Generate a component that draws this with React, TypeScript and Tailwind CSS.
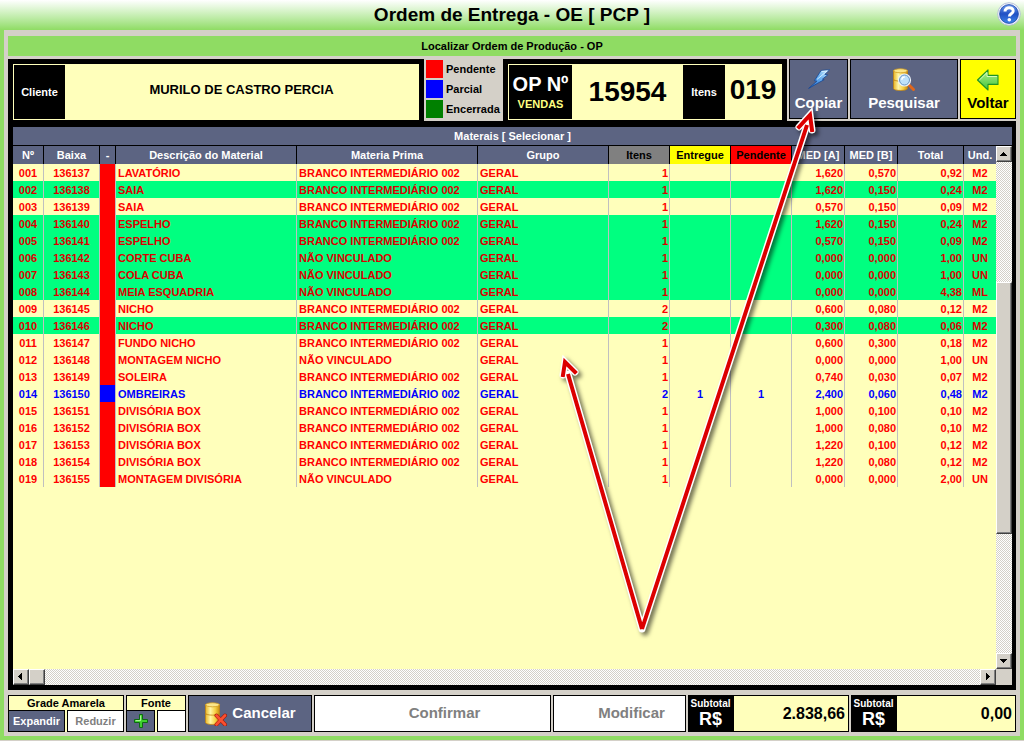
import { ReactNode } from 'react';

type Status = 'pendente' | 'parcial';

interface Material {
  baixa: string;
  descricao: string;
  vinculado: boolean;
  itens: number;
  entregue?: number;
  pendente?: number;
  medA: string;
  medB: string;
  total: string;
  und: string;
  status: Status;
  marked?: boolean;
}

const MATERIAIS: Material[] = [
  { baixa: '136137', descricao: 'LAVATÓRIO', vinculado: true, itens: 1, medA: '1,620', medB: '0,570', total: '0,92', und: 'M2', status: 'pendente' },
  { baixa: '136138', descricao: 'SAIA', vinculado: true, itens: 1, medA: '1,620', medB: '0,150', total: '0,24', und: 'M2', status: 'pendente', marked: true },
  { baixa: '136139', descricao: 'SAIA', vinculado: true, itens: 1, medA: '0,570', medB: '0,150', total: '0,09', und: 'M2', status: 'pendente' },
  { baixa: '136140', descricao: 'ESPELHO', vinculado: true, itens: 1, medA: '1,620', medB: '0,150', total: '0,24', und: 'M2', status: 'pendente', marked: true },
  { baixa: '136141', descricao: 'ESPELHO', vinculado: true, itens: 1, medA: '0,570', medB: '0,150', total: '0,09', und: 'M2', status: 'pendente', marked: true },
  { baixa: '136142', descricao: 'CORTE CUBA', vinculado: false, itens: 1, medA: '0,000', medB: '0,000', total: '1,00', und: 'UN', status: 'pendente', marked: true },
  { baixa: '136143', descricao: 'COLA CUBA', vinculado: false, itens: 1, medA: '0,000', medB: '0,000', total: '1,00', und: 'UN', status: 'pendente', marked: true },
  { baixa: '136144', descricao: 'MEIA ESQUADRIA', vinculado: false, itens: 1, medA: '0,000', medB: '0,000', total: '4,38', und: 'ML', status: 'pendente', marked: true },
  { baixa: '136145', descricao: 'NICHO', vinculado: true, itens: 2, medA: '0,600', medB: '0,080', total: '0,12', und: 'M2', status: 'pendente' },
  { baixa: '136146', descricao: 'NICHO', vinculado: true, itens: 2, medA: '0,300', medB: '0,080', total: '0,06', und: 'M2', status: 'pendente', marked: true },
  { baixa: '136147', descricao: 'FUNDO NICHO', vinculado: true, itens: 1, medA: '0,600', medB: '0,300', total: '0,18', und: 'M2', status: 'pendente' },
  { baixa: '136148', descricao: 'MONTAGEM NICHO', vinculado: false, itens: 1, medA: '0,000', medB: '0,000', total: '1,00', und: 'UN', status: 'pendente' },
  { baixa: '136149', descricao: 'SOLEIRA', vinculado: true, itens: 1, medA: '0,740', medB: '0,030', total: '0,07', und: 'M2', status: 'pendente' },
  { baixa: '136150', descricao: 'OMBREIRAS', vinculado: true, itens: 2, entregue: 1, pendente: 1, medA: '2,400', medB: '0,060', total: '0,48', und: 'M2', status: 'parcial' },
  { baixa: '136151', descricao: 'DIVISÓRIA BOX', vinculado: true, itens: 1, medA: '1,000', medB: '0,100', total: '0,10', und: 'M2', status: 'pendente' },
  { baixa: '136152', descricao: 'DIVISÓRIA BOX', vinculado: true, itens: 1, medA: '1,000', medB: '0,080', total: '0,10', und: 'M2', status: 'pendente' },
  { baixa: '136153', descricao: 'DIVISÓRIA BOX', vinculado: true, itens: 1, medA: '1,220', medB: '0,100', total: '0,12', und: 'M2', status: 'pendente' },
  { baixa: '136154', descricao: 'DIVISÓRIA BOX', vinculado: true, itens: 1, medA: '1,220', medB: '0,080', total: '0,12', und: 'M2', status: 'pendente' },
  { baixa: '136155', descricao: 'MONTAGEM DIVISÓRIA', vinculado: false, itens: 1, medA: '0,000', medB: '0,000', total: '2,00', und: 'UN', status: 'pendente' },
];

const COLUMNS = [
  { label: 'Nº', width: 'w-[31px]', head: '' },
  { label: 'Baixa', width: 'w-[56px]', head: '' },
  { label: '-', width: 'w-[16px]', head: '' },
  { label: 'Descrição do Material', width: '', head: '' },
  { label: 'Materia Prima', width: 'w-[181px]', head: '' },
  { label: 'Grupo', width: 'w-[131px]', head: '' },
  { label: 'Itens', width: 'w-[61px]', head: 'bg-[#808080] text-black' },
  { label: 'Entregue', width: 'w-[61px]', head: 'bg-[#ffff00] text-black' },
  { label: 'Pendente', width: 'w-[61px]', head: 'bg-[#ff0000] text-black' },
  { label: 'MED [A]', width: 'w-[53px]', head: '' },
  { label: 'MED [B]', width: 'w-[53px]', head: '' },
  { label: 'Total', width: 'w-[66px]', head: '' },
  { label: 'Und.', width: 'w-[32px]', head: '' },
];

const LEGEND = [
  { label: 'Pendente', color: 'bg-[#ff0000]' },
  { label: 'Parcial', color: 'bg-[#0000ff]' },
  { label: 'Encerrada', color: 'bg-[#008000]' },
];

function HelpIcon() {
  return (
    <svg className="w-6 h-6" viewBox="0 0 24 24" fill="none">
      <defs>
        <linearGradient id="help" x1="0" y1="0" x2="0" y2="1">
          <stop offset="0" stopColor="#6f9df0" />
          <stop offset="0.5" stopColor="#2050c4" />
          <stop offset="1" stopColor="#3f86ea" />
        </linearGradient>
      </defs>
      <circle cx="12" cy="12" r="11.3" fill="#f4f6fc" stroke="#a9b4d4" strokeWidth="0.8" />
      <circle cx="12" cy="12" r="9.4" fill="url(#help)" stroke="#1c47a8" strokeWidth="0.8" />
      <path d="M8 9.6C8 4.4 16.2 4.6 16.2 9c0 2.8-3.8 2.8-3.8 5.4" stroke="#fff" strokeWidth="3" />
      <circle cx="12.3" cy="17.7" r="1.8" fill="#fff" />
    </svg>
  );
}

function BoltIcon() {
  return (
    <svg className="w-6 h-6" viewBox="0 0 24 24">
      <defs>
        <linearGradient id="bolt" x1="1" y1="0" x2="0" y2="1">
          <stop offset="0" stopColor="#c8ecff" />
          <stop offset="0.5" stopColor="#5ea8ee" />
          <stop offset="1" stopColor="#1d63c6" />
        </linearGradient>
      </defs>
      <path d="M14.2 2.4 22.6 1.8 17.8 6.4l3 .4-5.4 4.4 1.8.4L1.6 20.4l8.2-7.2-2.4-.6z" fill="url(#bolt)" stroke="#174795" strokeWidth="0.8" strokeLinejoin="round" />
      <path d="M14.8 3.4 20.2 3 10 11.4" fill="none" stroke="#e6f7ff" strokeWidth="0.8" />
    </svg>
  );
}

function Cylinder() {
  return (
    <>
      <defs>
        <linearGradient id="gold" x1="0" y1="0" x2="1" y2="0">
          <stop offset="0" stopColor="#e9b524" />
          <stop offset="0.35" stopColor="#fff6a8" />
          <stop offset="0.7" stopColor="#f6d043" />
          <stop offset="1" stopColor="#c98c10" />
        </linearGradient>
      </defs>
      <path d="M1.5 12v8.5c0 2.6 14 2.6 14 0V12z" fill="url(#gold)" stroke="#c08414" strokeWidth="0.8" />
      <path d="M1.5 2.8v8.4c0 2.6 14 2.6 14 0V2.8z" fill="url(#gold)" stroke="#c08414" strokeWidth="0.8" />
      <ellipse cx="8.5" cy="2.8" rx="7" ry="2" fill="#fbe68a" stroke="#d09a20" strokeWidth="0.8" />
    </>
  );
}

function SearchDataIcon() {
  return (
    <svg className="w-6 h-6" viewBox="0 0 24 24">
      <Cylinder />
      <path d="m16.5 16.5 5 5" stroke="#e0661c" strokeWidth="3" strokeLinecap="round" />
      <circle cx="12.5" cy="12" r="5.8" fill="#bfe2fa" stroke="#eef3f8" strokeWidth="1.6" />
      <circle cx="12.5" cy="12" r="5" fill="none" stroke="#5e8fc0" strokeWidth="0.9" />
      <path d="M9.8 11.8c.2-2 1.6-2.9 3-2.8" fill="none" stroke="#fff" strokeWidth="1.4" />
    </svg>
  );
}

function CancelDataIcon() {
  return (
    <svg className="w-6 h-6" viewBox="0 0 24 24">
      <Cylinder />
      <path d="m12.5 13.5 8.5 9m0-9-8.5 9" stroke="#a01808" strokeWidth="4" strokeLinecap="round" />
      <path d="m12.5 13.5 8.5 9m0-9-8.5 9" stroke="#fa5030" strokeWidth="2.6" strokeLinecap="round" />
    </svg>
  );
}

function BackIcon() {
  return (
    <svg className="w-6 h-6" viewBox="0 0 24 24">
      <defs>
        <linearGradient id="back" x1="0" y1="0" x2="0" y2="1">
          <stop offset="0" stopColor="#b4f08a" />
          <stop offset="1" stopColor="#3fc43a" />
        </linearGradient>
      </defs>
      <path d="M1.5 12 12 1.8v5.6h10v9H12V22z" fill="url(#back)" stroke="#1f9426" strokeWidth="1.1" strokeLinejoin="round" />
      <path d="M3.4 12 11 4.6v3.9h9.9" fill="none" stroke="#dcffc4" strokeWidth="0.9" />
    </svg>
  );
}

function PlusIcon() {
  return (
    <svg className="w-4 h-4" viewBox="0 0 16 16">
      <path d="M6.5 1.5h3v5h5v3h-5v5h-3v-5h-5v-3h5z" fill="#3fd02e" stroke="#0c6a10" strokeWidth="1" strokeLinejoin="round" />
      <path d="M7.6 2.6v5H2.6" fill="none" stroke="#c0ffa8" strokeWidth="0.9" />
    </svg>
  );
}

const TRACK = 'bg-[conic-gradient(#ffffff_25%,#d4d0c8_0_50%,#ffffff_0_75%,#d4d0c8_0)] bg-[length:2px_2px]';
const THUMB = 'bg-[#d4d0c8] border border-t-white border-l-white border-r-[#404040] border-b-[#404040] shadow-[inset_-1px_-1px_0_#808080]';

function ScrollButton({ label, path, className }: { label: string; path: string; className?: string }) {
  return (
    <button aria-label={label} className={`flex-none w-4 h-4 flex items-center justify-center ${THUMB} ${className ?? ''}`}>
      <svg className="w-2 h-2" viewBox="0 0 8 8" shapeRendering="crispEdges">
        <path d={path} fill="#000" />
      </svg>
    </button>
  );
}

function ToolButton({ label, icon, className }: { label: string; icon: ReactNode; className: string }) {
  return (
    <button className={`flex-none h-[60px] border border-black flex flex-col items-center justify-center gap-[3px] text-[15px] leading-4 font-bold ${className}`}>
      {icon}
      {label}
    </button>
  );
}

function Subtotal({ id, value, className }: { id: string; value: string; className: string }) {
  return (
    <div className={`flex-none flex ${className}`}>
      <label htmlFor={id} className="flex-none w-[45px] bg-black text-white font-bold text-center text-[10px] leading-3 pt-[3px]">
        Subtotal
        <span className="block text-lg leading-[18px]">R$</span>
      </label>
      <input
        id={id}
        readOnly
        value={value}
        className="flex-1 min-w-0 bg-[#ffffbb] border border-black text-right text-base font-bold pr-[3px]"
      />
    </div>
  );
}

// Red annotation arrows drawn over the grid
function Arrows() {
  const lines = 'M642 629 568 374M642 629 807 125';
  const heads = 'M563 375 565 362 575 372M799 127 810 115 812 130';
  return (
    <svg className="absolute top-0 left-0 w-[1024px] h-[741px] pointer-events-none" viewBox="0 0 1024 741" fill="none">
      <g className="drop-shadow-[3px_3px_2px_rgba(0,0,0,0.55)]">
        <path d={lines} stroke="#fff" strokeWidth="7" strokeLinecap="round" />
        <path d={heads} stroke="#fff" strokeWidth="7" strokeLinecap="round" />
        <path d={lines} stroke="#dc0000" strokeWidth="4" />
        <path d={heads} stroke="#dc0000" strokeWidth="4" strokeLinecap="square" />
      </g>
    </svg>
  );
}

function MaterialRow({ item, index }: { item: Material; index: number }) {
  const parcial = item.status === 'parcial';
  const text = parcial ? 'text-[#0000ff]' : item.marked ? 'text-[#dc0000]' : 'text-[#ff0000]';
  const cell = 'border-r border-[#c0c0c0] whitespace-nowrap';

  return (
    <tr className={`h-[17px] ${text} ${item.marked ? 'bg-[#00ff80]' : ''}`}>
      <td className={`${cell} text-center`}>{String(index + 1).padStart(3, '0')}</td>
      <td className={`${cell} text-center`}>{item.baixa}</td>
      <td className={`${cell} ${parcial ? 'bg-[#0000ff]' : 'bg-[#ff0000]'}`} />
      <td className={`${cell} pl-0.5`}>{item.descricao}</td>
      <td className={`${cell} pl-0.5`}>{item.vinculado ? 'BRANCO INTERMEDIÁRIO 002' : 'NÃO VINCULADO'}</td>
      <td className={`${cell} pl-0.5`}>GERAL</td>
      <td className={`${cell} text-right pr-px`}>{item.itens}</td>
      <td className={`${cell} text-center`}>{item.entregue}</td>
      <td className={`${cell} text-center`}>{item.pendente}</td>
      <td className={`${cell} text-right pr-px`}>{item.medA}</td>
      <td className={`${cell} text-right pr-px`}>{item.medB}</td>
      <td className={`${cell} text-right pr-px`}>{item.total}</td>
      <td className="text-center">{item.und}</td>
    </tr>
  );
}

export default function App() {
  return (
    <div className="relative min-h-screen flex flex-col bg-[#8fdc63] font-['Liberation_Sans',Arial,sans-serif] text-black pb-1 border-b border-[#d4d0c8]">
      {/* Title bar */}
      <header className="flex-none relative h-[30px] bg-linear-to-b from-white to-[#8fdc63] flex items-center justify-center">
        <h1 className="text-[19px] leading-6 font-bold">Ordem de Entrega - OE [ PCP ]</h1>
        <button aria-label="Ajuda" className="absolute top-0.5 right-[3px]">
          <HelpIcon />
        </button>
      </header>

      <main className="flex-1 flex flex-col mx-1 px-1 pt-1.5 pb-1 bg-[#d4d0c8]">
        <h2 className="flex-none h-5 bg-[#8fdc63] text-center text-[11px] leading-5 font-bold">
          Localizar Ordem de Produção - OP
        </h2>

        {/* Order summary */}
        <div className="flex-none flex mt-[3px] h-[62px]">
          <div className="flex-1 min-w-0 bg-black p-[5px]">
            <div className="h-[56px] flex bg-[#ffffbb] p-px">
              <label htmlFor="cliente" className="flex-none w-[51px] bg-black text-white text-[11px] font-bold flex items-center justify-center">
                Cliente
              </label>
              <input
                id="cliente"
                readOnly
                value="MURILO DE CASTRO PERCIA"
                className="flex-1 min-w-0 pb-1 text-center text-[13px] font-bold"
              />
            </div>
          </div>

          <ul className="flex-none w-[79px] pl-0.5 pt-px flex flex-col gap-0.5 text-[11px] font-bold">
            {LEGEND.map((item) => (
              <li key={item.label} className="flex items-center gap-[3px]">
                <span className={`flex-none w-[17px] h-[18px] ${item.color}`} />
                {item.label}
              </li>
            ))}
          </ul>

          <div className="flex-none w-[284px] bg-black p-[5px]">
            <div className="h-[56px] flex bg-[#ffffbb] p-px font-bold">
              <div className="flex-none w-[63px] bg-black text-white text-center">
                <div className="text-xl leading-6 pt-[7px]">OP Nº</div>
                <div className="text-[11px] leading-4 text-[#ffff80]">VENDAS</div>
              </div>
              <div className="flex-1 flex items-center justify-center text-[28px]">15954</div>
              <div className="flex-none w-[42px] bg-black text-white text-[11px] flex items-center justify-center">Itens</div>
              <div className="flex-none w-[56px] flex items-center justify-center pb-1 text-[28px]">019</div>
            </div>
          </div>

          <div className="flex-none flex gap-0.5 pl-0.5">
            <ToolButton label="Copiar" icon={<BoltIcon />} className="w-[59px] bg-[#5c6482] text-white" />
            <ToolButton label="Pesquisar" icon={<SearchDataIcon />} className="w-[108px] bg-[#5c6482] text-white" />
            <ToolButton label="Voltar" icon={<BackIcon />} className="w-[56px] bg-[#ffff00] text-black" />
          </div>
        </div>

        {/* Materials grid */}
        <section className="flex-1 flex flex-col bg-black pt-1.5 pb-[5px] pl-[5px] pr-1">
          <h3 className="flex-none h-[18px] bg-[#5c6482] text-white text-center text-[11px] leading-[18px] font-bold">
            Materais [ Selecionar ]
          </h3>
          <div className="flex-1 flex mt-px bg-[#ffffbb]">
            <div className="flex-1 min-w-0">
              <table className="w-full table-fixed border-separate border-spacing-0 text-[11px] leading-4 font-bold">
                <thead>
                  <tr className="h-[18px] text-white">
                    {COLUMNS.map((col, i) => (
                      <th
                        key={col.label}
                        className={`${col.width} ${col.head || 'bg-[#5c6482]'} whitespace-nowrap border-black ${i < COLUMNS.length - 1 ? 'border-r' : ''}`}
                      >
                        {col.label}
                      </th>
                    ))}
                  </tr>
                </thead>
                <tbody>
                  {MATERIAIS.map((item, i) => (
                    <MaterialRow key={item.baixa} item={item} index={i} />
                  ))}
                </tbody>
              </table>
            </div>
            <div className={`flex-none w-4 flex flex-col ${TRACK}`}>
              <ScrollButton label="Rolar para cima" path="M3 2h1v1h1v1h1v1h1v1H0V5h1V4h1V3h1z" />
              <div className="flex-[120]" />
              <div className={`flex-[251] ${THUMB}`} />
              <div className="flex-[120]" />
              <ScrollButton label="Rolar para baixo" path="M0 2h7v1H6v1H5v1H4v1H3V5H2V4H1V3H0z" />
            </div>
          </div>
          <div className="flex-none flex h-4 bg-[#d4d0c8]">
            <div className={`flex-1 flex ${TRACK}`}>
              <ScrollButton label="Rolar para a esquerda" path="M5 0v7H4V6H3V5H2V4H1V3h1V2h1V1h1V0z" />
              <div className={`flex-none w-4 ${THUMB}`} />
              <ScrollButton label="Rolar para a direita" path="M2 0h1v1h1v1h1v1h1v1H5v1H4v1H3v1H2z" className="ml-auto" />
            </div>
            <div className="flex-none w-4" />
          </div>
        </section>

        {/* Actions */}
        <footer className="flex-none flex gap-0.5 mt-[5px] h-[37px] font-bold">
          <div className="flex-none w-[116px] flex flex-col bg-[#ffffbb] text-[11px]">
            <div className="h-[15px] border border-b-0 border-black text-center leading-[15px]">Grade Amarela</div>
            <div className="flex-1 flex gap-0.5">
              <button className="flex-1 bg-[#5c6482] text-white border border-black">Expandir</button>
              <button disabled className="flex-1 bg-white text-[#808080] border border-black">Reduzir</button>
            </div>
          </div>
          <div className="flex-none w-[60px] flex flex-col bg-[#ffffbb] text-[11px]">
            <div className="h-[15px] border border-b-0 border-black text-center leading-[15px]">Fonte</div>
            <div className="flex-1 flex gap-0.5">
              <button aria-label="Aumentar fonte" className="flex-1 bg-[#5c6482] border border-black flex items-center justify-center">
                <PlusIcon />
              </button>
              <button disabled aria-label="Diminuir fonte" className="flex-1 bg-white border border-black" />
            </div>
          </div>
          <button className="flex-none w-[124px] bg-[#5c6482] text-white border border-black text-[15px] flex items-center justify-center gap-1">
            <CancelDataIcon />
            Cancelar
          </button>
          <button disabled className="flex-1 bg-white text-[#808080] border border-black text-[15px] pl-6">Confirmar</button>
          <button disabled className="flex-none w-[133px] bg-white text-[#808080] border border-black text-[15px] pl-6">Modificar</button>
          <Subtotal id="subtotal-entregue" value="2.838,66" className="w-[161px]" />
          <Subtotal id="subtotal-pendente" value="0,00" className="w-[165px]" />
        </footer>
      </main>

      <Arrows />
    </div>
  );
}
